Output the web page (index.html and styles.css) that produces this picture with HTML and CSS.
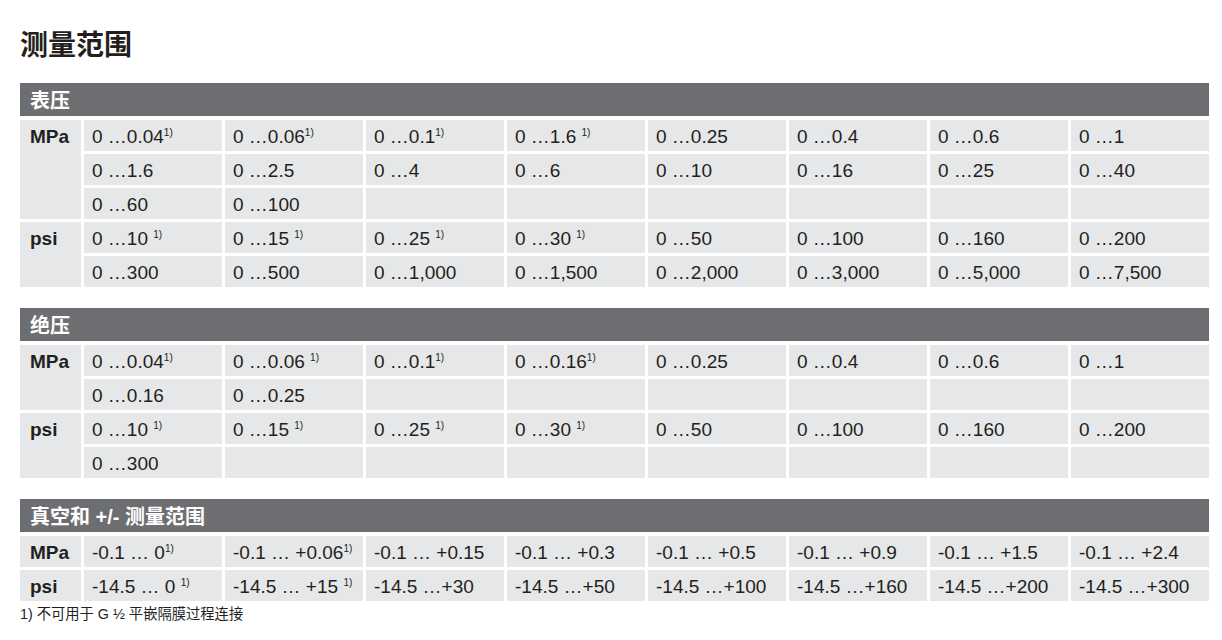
FILE: index.html
```html
<!DOCTYPE html>
<html lang="zh">
<head>
<meta charset="utf-8">
<title>测量范围</title>
<link rel="stylesheet" href="styles.css">
</head>
<body>
<div class="page">
  <h1 class="title">测量范围</h1>

  <section class="block">
    <div class="block-head">表压</div>
    <div class="grid">
      <div class="label span3">MPa</div>
      <div class="cell">0 …0.04<sup>1)</sup></div>
      <div class="cell">0 …0.06<sup>1)</sup></div>
      <div class="cell">0 …0.1<sup>1)</sup></div>
      <div class="cell">0 …1.6 <sup>1)</sup></div>
      <div class="cell">0 …0.25</div>
      <div class="cell">0 …0.4</div>
      <div class="cell">0 …0.6</div>
      <div class="cell">0 …1</div>
      <div class="cell">0 …1.6</div>
      <div class="cell">0 …2.5</div>
      <div class="cell">0 …4</div>
      <div class="cell">0 …6</div>
      <div class="cell">0 …10</div>
      <div class="cell">0 …16</div>
      <div class="cell">0 …25</div>
      <div class="cell">0 …40</div>
      <div class="cell">0 …60</div>
      <div class="cell">0 …100</div>
      <div class="cell"></div>
      <div class="cell"></div>
      <div class="cell"></div>
      <div class="cell"></div>
      <div class="cell"></div>
      <div class="cell"></div>
      <div class="label span2">psi</div>
      <div class="cell">0 …10 <sup>1)</sup></div>
      <div class="cell">0 …15 <sup>1)</sup></div>
      <div class="cell">0 …25 <sup>1)</sup></div>
      <div class="cell">0 …30 <sup>1)</sup></div>
      <div class="cell">0 …50</div>
      <div class="cell">0 …100</div>
      <div class="cell">0 …160</div>
      <div class="cell">0 …200</div>
      <div class="cell">0 …300</div>
      <div class="cell">0 …500</div>
      <div class="cell">0 …1,000</div>
      <div class="cell">0 …1,500</div>
      <div class="cell">0 …2,000</div>
      <div class="cell">0 …3,000</div>
      <div class="cell">0 …5,000</div>
      <div class="cell">0 …7,500</div>
    </div>
  </section>

  <section class="block">
    <div class="block-head">绝压</div>
    <div class="grid">
      <div class="label span2">MPa</div>
      <div class="cell">0 …0.04<sup>1)</sup></div>
      <div class="cell">0 …0.06 <sup>1)</sup></div>
      <div class="cell">0 …0.1<sup>1)</sup></div>
      <div class="cell">0 …0.16<sup>1)</sup></div>
      <div class="cell">0 …0.25</div>
      <div class="cell">0 …0.4</div>
      <div class="cell">0 …0.6</div>
      <div class="cell">0 …1</div>
      <div class="cell">0 …0.16</div>
      <div class="cell">0 …0.25</div>
      <div class="cell"></div>
      <div class="cell"></div>
      <div class="cell"></div>
      <div class="cell"></div>
      <div class="cell"></div>
      <div class="cell"></div>
      <div class="label span2">psi</div>
      <div class="cell">0 …10 <sup>1)</sup></div>
      <div class="cell">0 …15 <sup>1)</sup></div>
      <div class="cell">0 …25 <sup>1)</sup></div>
      <div class="cell">0 …30 <sup>1)</sup></div>
      <div class="cell">0 …50</div>
      <div class="cell">0 …100</div>
      <div class="cell">0 …160</div>
      <div class="cell">0 …200</div>
      <div class="cell">0 …300</div>
      <div class="cell"></div>
      <div class="cell"></div>
      <div class="cell"></div>
      <div class="cell"></div>
      <div class="cell"></div>
      <div class="cell"></div>
      <div class="cell"></div>
    </div>
  </section>

  <section class="block">
    <div class="block-head">真空和 +/- 测量范围</div>
    <div class="grid">
      <div class="label">MPa</div>
      <div class="cell">-0.1 … 0<sup>1)</sup></div>
      <div class="cell">-0.1 … +0.06<sup>1)</sup></div>
      <div class="cell">-0.1 … +0.15</div>
      <div class="cell">-0.1 … +0.3</div>
      <div class="cell">-0.1 … +0.5</div>
      <div class="cell">-0.1 … +0.9</div>
      <div class="cell">-0.1 … +1.5</div>
      <div class="cell">-0.1 … +2.4</div>
      <div class="label">psi</div>
      <div class="cell">-14.5 … 0 <sup>1)</sup></div>
      <div class="cell">-14.5 … +15 <sup>1)</sup></div>
      <div class="cell">-14.5 …+30</div>
      <div class="cell">-14.5 …+50</div>
      <div class="cell">-14.5 …+100</div>
      <div class="cell">-14.5 …+160</div>
      <div class="cell">-14.5 …+200</div>
      <div class="cell">-14.5 …+300</div>
    </div>
  </section>

  <p class="footnote">1) 不可用于 G ½ 平嵌隔膜过程连接</p>
</div>
</body>
</html>
```

FILE: styles.css
```css
html, body {
  margin: 0;
  padding: 0;
  background: #ffffff;
}

body {
  font-family: "Liberation Sans", "Noto Sans CJK SC", Arial, sans-serif;
  color: #231f20;
}

.page {
  width: 1189px;
  padding: 0 13px 0 20px;
}

.title {
  margin: 0;
  padding-top: 28px;
  height: 56px;
  box-sizing: border-box;
  font-size: 28px;
  line-height: 30px;
  font-weight: bold;
  font-family: "Noto Sans CJK SC", "Liberation Sans", sans-serif;
}

.block + .block {
  margin-top: 21px;
}

.title + .block {
  margin-top: 27px;
}

.block-head {
  height: 33px;
  background: #6d6e71;
  color: #ffffff;
  font-size: 20px;
  font-weight: bold;
  padding-left: 10px;
  display: flex;
  align-items: center;
  font-family: "Liberation Sans", "Noto Sans CJK SC", sans-serif;
}

.grid {
  margin-top: 4px;
  display: grid;
  grid-template-columns: 61px repeat(8, 1fr);
  grid-auto-rows: 31px;
  column-gap: 3px;
  row-gap: 3px;
}

.cell,
.label {
  background: #e6e7e8;
  font-size: 19px;
  line-height: 29px;
  padding-top: 2px;
  white-space: nowrap;
}

.cell {
  padding-left: 8px;
}

.label {
  font-weight: bold;
  padding-left: 10px;
}

.span2 {
  grid-row: span 2;
}

.span3 {
  grid-row: span 3;
}

sup {
  font-size: 10px;
  line-height: 0;
  vertical-align: 7px;
}

.footnote {
  margin: 4px 0 0 0;
  font-size: 14.3px;
  line-height: 18px;
}
```
